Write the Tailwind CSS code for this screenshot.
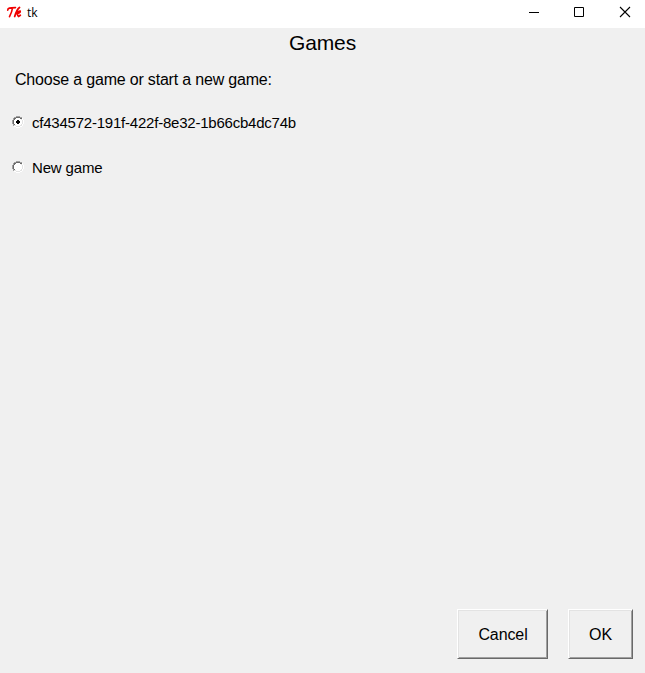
<!DOCTYPE html>
<html lang="en">
<head>
<meta charset="utf-8">
<title>tk</title>
<script src="https://cdn.jsdelivr.net/npm/@tailwindcss/browser@4"></script>
</head>
<body class="h-[673px] w-[645px] overflow-hidden bg-[#f0f0f0] font-['Liberation_Sans',Arial,sans-serif] text-black">
<div class="flex h-full flex-col">
  <header class="flex h-7 shrink-0 items-start bg-white">
    <svg class="ml-[6px] mt-[6px]" width="16" height="13" viewBox="0 0 16 13" fill="none" stroke="#f00000" stroke-linecap="round" stroke-linejoin="round">
      <path stroke-width="1.6" d="M1.7 4.300C1.700 2 3.500 1.700 9.500 1.600M6.500 2C6.200 5 4.800 8 3.500 10.700"/>
      <path stroke-width="1.8" d="M13.500 1.500C12 2.500 10 6 8.700 10.500M9.700 8C11 6.500 13 4.800 14.200 5.200C14.500 6.500 12.500 7.300 11.300 7.400C11.500 9 11.800 10.300 12.500 10.500L14.300 9.300"/>
    </svg>
    <span class="ml-[5px] mt-[5px] font-['Open_Sans',sans-serif] text-[12px] leading-4">tk</span>
    <div class="ml-auto flex h-6">
      <svg width="45" height="24" viewBox="0 0 45 24" stroke="#000" fill="none"><path d="M18 12.5h10"/></svg>
      <svg width="46" height="24" viewBox="0 0 46 24" stroke="#000" fill="none"><path d="M18.5 7.500h9v9h-9z"/></svg>
      <svg width="43" height="24" viewBox="0 0 43 24" stroke="#000" stroke-width="1.1" fill="none"><path d="M18 7l10 10M28 7L18 17"/></svg>
    </div>
  </header>
  <main class="flex grow flex-col">
    <h1 class="mt-[3px] text-center text-[21px] leading-6 tracking-[-0.1px]">Games</h1>
    <p class="ml-[15px] mt-[15px] text-[16px] leading-5 tracking-[-0.19px]"><span class="whitespace-nowrap">Choose a game or start a new game:</span></p>
    <label class="ml-3 mt-[23px] flex h-5 items-start">
      <svg class="mt-[3px]" width="12" height="12" viewBox="0 0 12 12" shape-rendering="crispEdges">
        <path fill="#fff" d="M4 2h4v1h1v1h1v4h-1v1h-1v1h-4v-1h-1v-1h-1v-4h1v-1h1z"/>
        <path fill="#a0a0a0" d="M4 0h4v1h-4zM2 1h2v1h-2zM8 1h2v1h-2zM1 2h1v2h-1zM0 4h1v4h-1zM1 8h1v2h-1z"/>
        <path fill="#696969" d="M4 1h4v1h-4zM2 2h2v1h-2zM8 2h2v1h-2zM2 3h1v1h-1zM1 4h1v4h-1zM2 8h1v1h-1z"/>
        <path fill="#e3e3e3" d="M9 3h1v1h-1zM10 4h1v4h-1zM9 8h1v1h-1zM8 9h2v1h-2zM4 10h4v1h-4zM2 9h2v1h-2z"/>
        <path fill="#fff" d="M10 2h1v2h-1zM11 4h1v4h-1zM10 8h1v2h-1zM8 10h2v1h-2zM4 11h4v1h-4zM2 10h2v1h-2z"/>
        <path fill="#000" d="M5 4h2v1h1v2h-1v1h-2v-1h-1v-2h1z"/>
      </svg>
      <span class="ml-2 text-[15px] leading-5 tracking-[-0.22px]">cf434572-191f-422f-8e32-1b66cb4dc74b</span>
    </label>
    <label class="ml-3 mt-[25px] flex h-5 items-start">
      <svg class="mt-[3px]" width="12" height="12" viewBox="0 0 12 12" shape-rendering="crispEdges">
        <path fill="#fff" d="M4 2h4v1h1v1h1v4h-1v1h-1v1h-4v-1h-1v-1h-1v-4h1v-1h1z"/>
        <path fill="#a0a0a0" d="M4 0h4v1h-4zM2 1h2v1h-2zM8 1h2v1h-2zM1 2h1v2h-1zM0 4h1v4h-1zM1 8h1v2h-1z"/>
        <path fill="#696969" d="M4 1h4v1h-4zM2 2h2v1h-2zM8 2h2v1h-2zM2 3h1v1h-1zM1 4h1v4h-1zM2 8h1v1h-1z"/>
        <path fill="#e3e3e3" d="M9 3h1v1h-1zM10 4h1v4h-1zM9 8h1v1h-1zM8 9h2v1h-2zM4 10h4v1h-4zM2 9h2v1h-2z"/>
        <path fill="#fff" d="M10 2h1v2h-1zM11 4h1v4h-1zM10 8h1v2h-1zM8 10h2v1h-2zM4 11h4v1h-4zM2 10h2v1h-2z"/>
      </svg>
      <span class="ml-2 text-[15px] leading-5 tracking-[-0.16px]">New game</span>
    </label>
    <div class="mb-[14px] mr-3 mt-auto flex justify-end gap-5">
      <button class="h-[50px] w-[91px] border border-t-white border-l-white border-r-[#696969] border-b-[#696969] pt-[2px] pl-px text-[16px] tracking-[-0.1px] shadow-[inset_1px_1px_#e3e3e3,inset_-1px_-1px_#a0a0a0]">Cancel</button>
      <button class="h-[50px] w-[65px] border border-t-white border-l-white border-r-[#696969] border-b-[#696969] pt-[2px] text-[16px] shadow-[inset_1px_1px_#e3e3e3,inset_-1px_-1px_#a0a0a0]">OK</button>
    </div>
  </main>
</div>
</body>
</html>
